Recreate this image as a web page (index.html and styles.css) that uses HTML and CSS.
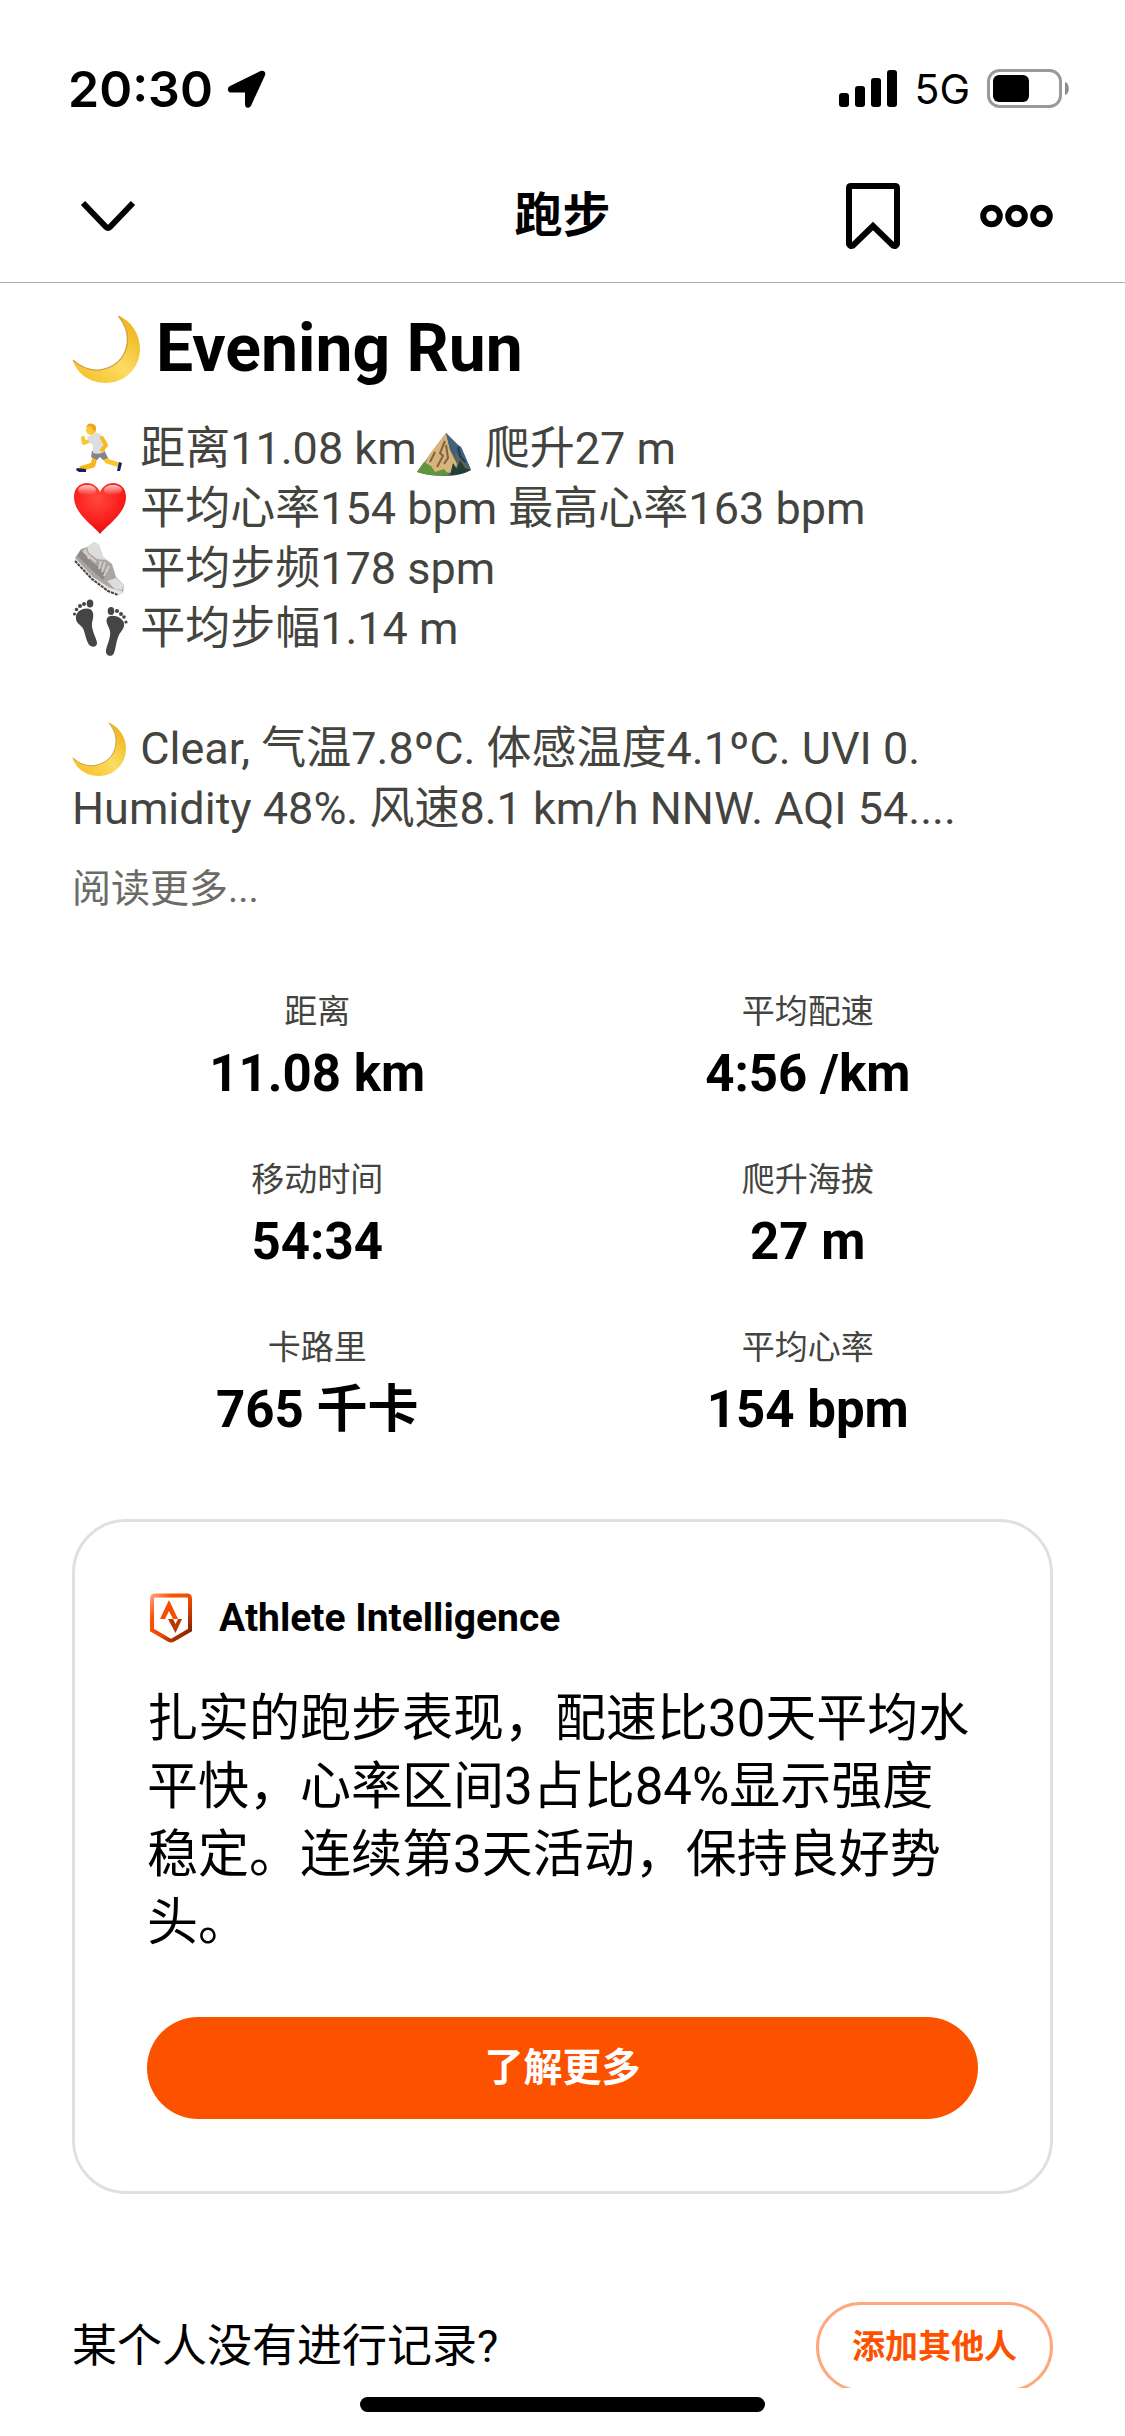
FILE: index.html
```html
<!DOCTYPE html>
<html lang="zh">
<head>
    <meta charset="UTF-8">
    <meta name="viewport" content="width=device-width, initial-scale=1.0">
    <title>跑步</title>
    <link rel="stylesheet" href="styles.css">
</head>
<body>

<!-- 渐变和可复用的图标 -->
<svg class="defs" width="0" height="0" aria-hidden="true">
    <defs>
        <linearGradient id="moonFill" x1="0.2" y1="1" x2="0.9" y2="0.2">
            <stop offset="0" stop-color="#f7c02c"/>
            <stop offset="0.5" stop-color="#fbdc62"/>
            <stop offset="1" stop-color="#f0b823"/>
        </linearGradient>
        <radialGradient id="heartFill" cx="0.45" cy="0.3" r="0.75">
            <stop offset="0" stop-color="#ff4a40"/>
            <stop offset="0.6" stop-color="#fb1f1b"/>
            <stop offset="1" stop-color="#d80f12"/>
        </radialGradient>
        <linearGradient id="heartShine" x1="0" y1="0" x2="0" y2="1">
            <stop offset="0" stop-color="#fff" stop-opacity="0.75"/>
            <stop offset="1" stop-color="#fff" stop-opacity="0"/>
        </linearGradient>
        <linearGradient id="badgeFill" x1="0" y1="0" x2="1" y2="1">
            <stop offset="0" stop-color="#ff9d80"/>
            <stop offset="0.25" stop-color="#fc5200"/>
            <stop offset="0.55" stop-color="#ec4a00"/>
            <stop offset="1" stop-color="#6b1a00"/>
        </linearGradient>
    </defs>
    <symbol id="moon" viewBox="0 0 54 54">
        <path d="M36 0C48 5 54 16 54 27C54 42 42 54 27 54C14 54 4 47 0 35C8 43 17 45 25 43C37 40 44 31 44 19C44 11 41 5 36 0Z" fill="url(#moonFill)"/>
        <path d="M1 36C9 43 17 45 25 43C37 40 44 31 44 19C44 12 41 6 37 1" fill="none" stroke="#b98324" stroke-width="1" opacity="0.7"/>
    </symbol>
</svg>

<!-- 状态栏 -->
<div class="status-bar">
    <div class="status-left">
        <span class="time">20:30</span>
        <svg width="40" height="40" viewBox="0 0 40 40" aria-hidden="true">
            <path d="M3.500 18L34 3C36 2 38 3.500 37 6L23 36.500C22 38.500 19 38 19 35.500V22.500H4.500C1.500 22.500 1 19.300 3.500 18Z" stroke="#000" stroke-width="2" stroke-linejoin="round"/>
        </svg>
    </div>
    <div class="status-right">
        <svg width="58" height="38" viewBox="0 0 58 38" aria-hidden="true">
            <rect x="0" y="23" width="10" height="14" rx="3"/>
            <rect x="16" y="16" width="10" height="21" rx="3"/>
            <rect x="32" y="8" width="10" height="29" rx="3"/>
            <rect x="48" y="0" width="10" height="37" rx="3"/>
        </svg>
        <span class="network">5G</span>
        <svg width="83" height="40" viewBox="0 0 83 40" aria-hidden="true">
            <rect x="1.500" y="1.500" width="72" height="36" rx="11" fill="none" stroke="#999" stroke-width="3"/>
            <rect x="6" y="6" width="36" height="27" rx="6"/>
            <path d="M78 13C83 14 83 25 78 26Z" fill="#8a8a8a"/>
        </svg>
    </div>
</div>

<!-- 顶部导航栏 -->
<div class="header">
    <div class="header-side">
        <button class="icon-btn" aria-label="关闭">
            <svg width="72" height="32" viewBox="-8 0 72 32"><path d="M3 3L26 27Q28 29 30 27L53 3" fill="none" stroke="#000" stroke-width="6"/></svg>
        </button>
    </div>
    <h1>跑步</h1>
    <div class="header-side header-actions">
        <button class="icon-btn" aria-label="收藏">
            <svg width="54" height="66" viewBox="0 0 54 66"><path d="M5 3H49Q51 3 51 5V61Q50 64 47 62.500L27 43L7 62.500Q4 64 3 61V5Q3 3 5 3Z" fill="none" stroke="#000" stroke-width="6"/></svg>
        </button>
        <button class="icon-btn" aria-label="更多选项">
            <svg width="73" height="24" viewBox="0 0 73 24" fill="none" stroke="#000" stroke-width="6">
                <circle cx="11.500" cy="12" r="8.300"/>
                <circle cx="36.500" cy="12" r="8.300"/>
                <circle cx="61.500" cy="12" r="8.300"/>
            </svg>
        </button>
    </div>
</div>

<div class="main">
    <h2 class="title">
        <svg width="68" height="68" aria-hidden="true"><use href="#moon"/></svg>
        <span>Evening Run</span>
    </h2>

    <!-- 活动描述 -->
    <p class="description">
        <svg class="emoji" viewBox="0 0 54 54" aria-hidden="true">
            <path d="M23 35L21 43L8 47" fill="none" stroke="#f7b61e" stroke-width="5" stroke-linejoin="round"/>
            <path d="M32 34L35 39L47 43" fill="none" stroke="#fcc52c" stroke-width="5" stroke-linejoin="round"/>
            <path d="M17 19L12 21L11 16" fill="none" stroke="#fcc52c" stroke-width="4" stroke-linecap="round" stroke-linejoin="round"/>
            <path d="M20 29L32 28L36 36L31 38L28 35L25 38L19 35Z" fill="#85868b"/>
            <path d="M15 15L24 11Q29 11 31 16L32 30Q27 33 21 31L21 23L17 20Z" fill="#dcdde1"/>
            <path d="M30 16L34 23L30 28" fill="none" stroke="#f9b91f" stroke-width="4" stroke-linecap="round" stroke-linejoin="round"/>
            <circle cx="19" cy="8" r="5" fill="#ffc83b"/>
            <path d="M14 5Q16 0 21 2Q26 4 23 10L20 7L19 4Z" fill="#e6a91b"/>
            <path d="M5 46L14 47L14 50L7 50L4 48Z" fill="#152458"/>
            <path d="M47 40L50 41L48 49L45 49Z" fill="#152458"/>
        </svg>
        距离11.08 km<svg class="emoji" viewBox="0 0 54 54" aria-hidden="true">
            <path d="M29 11L0 50Q12 54 28 54Q44 54 54 48L44 25L41 23L35 17Z" fill="#5d6460"/>
            <path d="M29 11L12 33L7 43L17 50L38 51L40 42L33 28Z" fill="#d7b47a"/>
            <path d="M29 11L33 27L40 38L37 28L49 43L54 48L44 25L41 23L35 17Z" fill="#3f607e"/>
            <path d="M28 19L23 31L26 34L20 45M29 23L31 36L27 42M18 30L13 40" fill="none" stroke="#806344" stroke-width="2"/>
            <path d="M0 50L7 40L14 44L18 50L27 47L32 53Q15 55 0 50Z" fill="#5f963b"/>
            <path d="M33 53L36 41L40 47L43 38L48 46L54 48Q45 53 33 53Z" fill="#233f38"/>
            <path d="M41 25L43 34L48 40" fill="none" stroke="#243b4c" stroke-width="2"/>
        </svg>
        爬升27 m<br>
        <svg class="emoji" viewBox="0 0 54 54" aria-hidden="true">
            <path d="M28 52C22 44 2 32 2 15C2 6 8 1 15 1C21 1 26 5 28 10C30 5 35 1 41 1C48 1 54 6 54 15C54 32 34 44 28 52Z" fill="url(#heartFill)"/>
            <ellipse cx="15" cy="8" rx="9" ry="5" fill="url(#heartShine)"/>
            <ellipse cx="41" cy="8" rx="9" ry="5" fill="url(#heartShine)"/>
        </svg>
        平均心率154 bpm 最高心率163 bpm<br>
        <svg class="emoji" viewBox="0 0 54 54" aria-hidden="true">
            <path d="M22 0L15 5L9 7L3 16L4 21L20 38L36 50L46 53L51 51L52 43L44 35L40 22L31 15L27 3Z" fill="#aaa6a3"/>
            <path d="M22 0L15 5L17 11L25 17L34 18L31 15L27 3Z" fill="#dedddd"/>
            <path d="M9 8L5 14L21 29L31 38L35 31L20 20Z" fill="#8f8a87"/>
            <path d="M11 9L24 20M13 7L17 17M29 19L27 27M33 20L30 30M37 24L32 34" stroke="#d1cecb" stroke-width="2"/>
            <path d="M35 39L44 36L52 43L50 48L43 47Z" fill="#dedddb"/>
            <path d="M3 16L21 35L38 46L50 49L51 51L46 53L36 50L20 38L3 20Z" fill="#e7e6e4"/>
            <path d="M3 19L20 37L36 49L46 53" fill="none" stroke="#454341" stroke-width="2" stroke-dasharray="3 1"/>
        </svg>
        平均步频178 spm<br>
        <svg class="emoji" viewBox="0 0 54 54" fill="#454545" aria-hidden="true">
            <path d="M4 14C5 8 13 5 18 7C23 10 21 16 20 21C19 28 25 37 25 41C25 46 18 46 16 41C13 35 13 29 10 25C7 22 3 20 4 14Z"/>
            <ellipse cx="18" cy="1.500" rx="3.300" ry="4"/>
            <circle cx="12" cy="2" r="2"/><circle cx="8" cy="4" r="2"/><circle cx="4.500" cy="7.500" r="1.800"/><circle cx="2.500" cy="12" r="1.600"/>
            <path d="M36 15C41 12 50 15 52 21C53 26 49 29 47 33C44 39 44 46 42 51C40 56 33 54 34 48C35 42 39 36 38 29C37 24 32 19 36 15Z"/>
            <ellipse cx="39" cy="9" rx="3.300" ry="4"/>
            <circle cx="45" cy="9" r="2"/><circle cx="49" cy="12" r="2"/><circle cx="52" cy="15" r="1.800"/><circle cx="54" cy="20" r="1.600"/>
        </svg>
        平均步幅1.14 m<br>
        <br>
        <svg class="emoji" aria-hidden="true"><use href="#moon"/></svg>
        Clear, 气温7.8ºC. 体感温度4.1ºC. UVI 0.<br>
        Humidity 48%. 风速8.1 km/h NNW. AQI 54....
    </p>
    <a class="read-more" href="#">阅读更多...</a>

    <!-- 数据统计 -->
    <dl class="stats">
        <div class="stat"><dt>距离</dt><dd>11.08 km</dd></div>
        <div class="stat"><dt>平均配速</dt><dd>4:56 /km</dd></div>
        <div class="stat"><dt>移动时间</dt><dd>54:34</dd></div>
        <div class="stat"><dt>爬升海拔</dt><dd>27 m</dd></div>
        <div class="stat"><dt>卡路里</dt><dd>765 千卡</dd></div>
        <div class="stat"><dt>平均心率</dt><dd>154 bpm</dd></div>
    </dl>

    <!-- 智能分析卡片 -->
    <div class="card">
        <h3 class="card-title">
            <svg width="48" height="50" viewBox="0 0 48 50" aria-hidden="true">
                <path d="M8 2.500H40Q43 2.500 43 5.500V37L26 47Q24 48 22 47L5 37V5.500Q5 2.500 8 2.500Z" fill="none" stroke="url(#badgeFill)" stroke-width="4"/>
                <path d="M22 7L31 26H26L22 18L18 26H13Z" fill="#f54d00"/>
                <path d="M21 26H26L28.500 31L31 26H35L28.500 40Z" fill="#b83800"/>
            </svg>
            <span>Athlete Intelligence</span>
        </h3>
        <p class="card-text">扎实的跑步表现，配速比30天平均水平快，心率区间3占比84%显示强度稳定。连续第3天活动，保持良好势头。</p>
        <button class="primary-btn">了解更多</button>
    </div>

    <div class="invite">
        <span>某个人没有进行记录?</span>
        <button class="outline-btn">添加其他人</button>
    </div>
</div>

<!-- 底部指示条 -->
<div class="home-bar"><div class="home-indicator"></div></div>

</body>
</html>
```
FILE: styles.css
```css
* {
    box-sizing: border-box;
}
body {
    font-family: Roboto, "Noto Sans CJK SC", sans-serif;
    background-color: #ffffff;
    color: #000000;
    margin: 0;
    height: 100vh;
    display: flex;
    flex-direction: column;
    overflow: hidden;
}
h1, h2, h3, p, dl, dd {
    margin: 0;
}
button {
    font-family: inherit;
    padding: 0;
    border: none;
    background: none;
    cursor: pointer;
}
svg {
    flex: none;
    overflow: visible;
}

/* 状态栏 */
.status-bar {
    flex: none;
    display: flex;
    justify-content: space-between;
    align-items: center;
    padding: 59px 55px 30px 68px;
    font-family: Inter, sans-serif;
}
.status-left,
.status-right {
    display: flex;
    align-items: center;
    height: 60px;
}
.status-left {
    gap: 14px;
}
.status-right {
    gap: 17px;
}
.time {
    font-size: 50px;
    font-weight: 600;
}
.network {
    font-size: 41px;
}

/* 顶部导航栏 */
.header {
    flex: none;
    display: flex;
    align-items: center;
    height: 134px;
    padding: 0 72px;
    border-bottom: 1px solid #b2b2b2;
}
.header h1 {
    font-size: 48px;
    font-weight: 600;
    line-height: 60px;
}
.header-side {
    flex: 1;
    display: flex;
}
.header-actions {
    justify-content: flex-end;
    gap: 80px;
}
.icon-btn {
    display: flex;
    align-items: center;
}

/* 主内容 */
.main {
    flex: 1;
    min-height: 0;
    overflow: hidden;
    padding: 28px 72px 0;
}
.title {
    display: flex;
    align-items: center;
    gap: 16px;
    font-size: 66px;
    font-weight: 700;
    line-height: 76px;
}
.description {
    margin-top: 32px;
    font-size: 45px;
    line-height: 60px;
    color: #44443f;
}
.emoji {
    width: 54px;
    height: 54px;
    margin-right: 3px;
    vertical-align: -12px;
}
.read-more {
    display: block;
    margin-top: 27px;
    font-size: 39px;
    line-height: 46px;
    color: #6b6b65;
    text-decoration: none;
}
.stats {
    display: grid;
    grid-template-columns: 1fr 1fr;
    row-gap: 56px;
    margin-top: 80px;
    text-align: center;
}
.stat dt {
    margin-bottom: 12px;
    font-size: 33px;
    line-height: 40px;
    color: #44443f;
}
.stat dd {
    font-size: 51px;
    font-weight: 700;
    line-height: 60px;
}

/* 卡片 */
.card {
    margin-top: 79px;
    padding: 72px;
    border: 3px solid #e0e0df;
    border-radius: 54px;
}
.card-title {
    display: flex;
    align-items: center;
    gap: 24px;
    height: 48px;
    font-size: 39px;
    font-weight: 700;
}
.card-text {
    margin-top: 43px;
    font-size: 51px;
    line-height: 68px;
}
.primary-btn {
    display: block;
    width: 100%;
    height: 102px;
    margin-top: 60px;
    border-radius: 51px;
    background-color: #fc5200;
    color: #ffffff;
    font-size: 39px;
    font-weight: 600;
    line-height: 46px;
}
.invite {
    display: flex;
    justify-content: space-between;
    align-items: center;
    margin-top: 108px;
    font-size: 45px;
    line-height: 60px;
}
.outline-btn {
    height: 90px;
    padding: 0 33px;
    border: 3px solid #fda87f;
    border-radius: 45px;
    color: #fc5200;
    font-size: 33px;
    font-weight: 600;
    line-height: 40px;
}

.home-bar {
    flex: none;
    height: 48px;
    padding-top: 9px;
}
.home-indicator {
    width: 36%;
    height: 15px;
    margin: 0 auto;
    border-radius: 8px;
    background-color: #000000;
}
```
